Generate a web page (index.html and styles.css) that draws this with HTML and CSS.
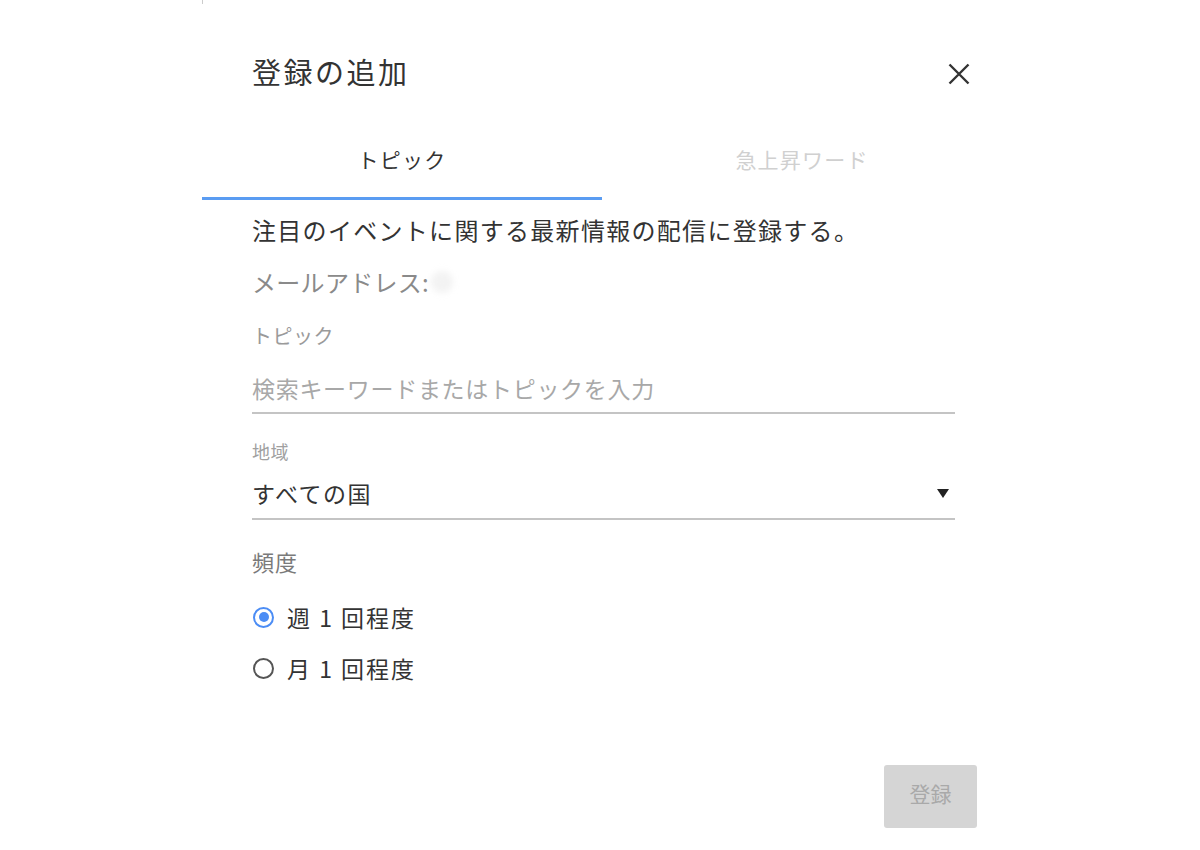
FILE: index.html
```html
<!DOCTYPE html>
<html lang="ja">
<head>
<meta charset="utf-8">
<title>登録の追加</title>
<link rel="stylesheet" href="styles.css">
</head>
<body>
<div class="edge-mark"></div>
<div class="dialog">
  <div class="header">
    <h1 class="title">登録の追加</h1>
    <button class="close" aria-label="閉じる">
      <svg width="22" height="22" viewBox="0 0 22 22"><path d="M1.5 1.5 L20.5 20.5 M20.5 1.5 L1.5 20.5" stroke="#333" stroke-width="2.4" fill="none"/></svg>
    </button>
  </div>
  <div class="tabs">
    <div class="tab active">トピック</div>
    <div class="tab">急上昇ワード</div>
  </div>
  <div class="content">
    <p class="desc">注目のイベントに関する最新情報の配信に登録する。</p>
    <p class="email">メールアドレス:<span class="email-blur"></span></p>
    <div class="label topic-label">トピック</div>
    <div class="input placeholder">検索キーワードまたはトピックを入力</div>
    <div class="label region-label">地域</div>
    <div class="input select">
      <span>すべての国</span>
      <svg class="caret" width="12" height="9" viewBox="0 0 12 9"><path d="M0 0 H12 L6 9 Z" fill="#222"/></svg>
    </div>
    <div class="label freq-label">頻度</div>
    <div class="radios">
      <div class="radio-row">
        <span class="radio checked"></span>
        <span class="radio-text">週 1 回程度</span>
      </div>
      <div class="radio-row">
        <span class="radio"></span>
        <span class="radio-text">月 1 回程度</span>
      </div>
    </div>
  </div>
  <div class="footer">
    <button class="submit" disabled>登録</button>
  </div>
</div>
</body>
</html>
```

FILE: styles.css
```css
html, body {
  margin: 0;
  padding: 0;
  background: #fff;
}
body {
  font-family: "Noto Sans CJK JP", "Noto Sans", sans-serif;
  color: #333;
  width: 1200px;
  height: 850px;
  overflow: hidden;
  position: relative;
}
.edge-mark {
  position: absolute;
  left: 202px;
  top: 0;
  width: 1px;
  height: 4px;
  background: #ccc;
}
.dialog {
  width: 800px;
  margin-left: 202px;
}
.header {
  display: flex;
  justify-content: space-between;
  align-items: center;
  padding: 51px 32px 0 50px;
}
.title {
  margin: 0;
  font-size: 29px;
  font-weight: 400;
  line-height: 40px;
  color: #333;
  letter-spacing: 2.5px;
}
.close {
  border: 0;
  background: none;
  padding: 0;
  width: 22px;
  height: 22px;
  margin-top: 6px;
  display: flex;
}
.tabs {
  display: flex;
  margin-top: 29px;
}
.tab {
  flex: 1;
  height: 77px;
  display: flex;
  align-items: center;
  justify-content: center;
  font-size: 21px;
  color: #d0d0d0;
  letter-spacing: 1.2px;
}
.tab.active {
  color: #333;
  height: 80px;
  box-sizing: border-box;
  border-bottom: 3px solid #5a9cf2;
}
.content {
  padding: 15px 47px 0 50px;
  display: flex;
  flex-direction: column;
}
.desc {
  margin: 0;
  font-size: 24px;
  line-height: 30px;
  color: #333;
  letter-spacing: 1.3px;
}
.email {
  margin: 22px 0 0;
  font-size: 24px;
  line-height: 30px;
  color: #8a8a8a;
  display: flex;
  align-items: center;
  letter-spacing: 0.3px;
}
.email-blur {
  display: inline-block;
  width: 22px;
  height: 22px;
  margin-left: 2px;
  border-radius: 50%;
  background: #f3f3f3;
  filter: blur(3px);
}
.label {
  color: #9a9a9a;
  font-size: 20px;
  line-height: 28px;
  letter-spacing: 0.5px;
}
.topic-label {
  margin-top: 25px;
}
.input {
  font-size: 23px;
  line-height: 32px;
  padding-bottom: 8px;
  border-bottom: 2px solid #c4c4c4;
}
.placeholder {
  margin-top: 22px;
  color: #a8a8a8;
  letter-spacing: 0.7px;
}
.region-label {
  margin-top: 24px;
  font-size: 18px;
  line-height: 26px;
  color: #a0a0a0;
}
.select {
  margin-top: 13px;
  display: flex;
  justify-content: space-between;
  align-items: center;
  color: #333;
  padding-bottom: 9px;
  padding-right: 6px;
}
.select span {
  letter-spacing: 1.5px;
}
.freq-label {
  margin-top: 26px;
  font-size: 22px;
  line-height: 30px;
  color: #7a7a7a;
  letter-spacing: 1px;
}
.radios {
  display: flex;
  flex-direction: column;
  gap: 15px;
  margin-top: 23px;
}
.radio-row {
  display: flex;
  align-items: center;
  height: 36px;
}
.radio {
  width: 17px;
  height: 17px;
  border: 2.7px solid #555;
  border-radius: 50%;
  position: relative;
  margin-left: 1px;
}
.radio.checked {
  border-color: #4c8df5;
}
.radio.checked::after {
  content: "";
  position: absolute;
  left: 50%;
  top: 50%;
  width: 10px;
  height: 10px;
  margin: -5px 0 0 -5px;
  border-radius: 50%;
  background: #4c8df5;
}
.radio-text {
  margin-left: 13px;
  font-size: 23px;
  color: #333;
  letter-spacing: 2px;
}
.footer {
  display: flex;
  justify-content: flex-end;
  padding: 79px 25px 0 0;
}
.submit {
  width: 93px;
  height: 63px;
  border: 0;
  border-radius: 3px;
  background: #d5d5d5;
  color: #a9a9a9;
  font-family: "Noto Sans CJK JP", sans-serif;
  font-size: 21px;
  line-height: 1;
  padding: 0 0 6px;
}
```
